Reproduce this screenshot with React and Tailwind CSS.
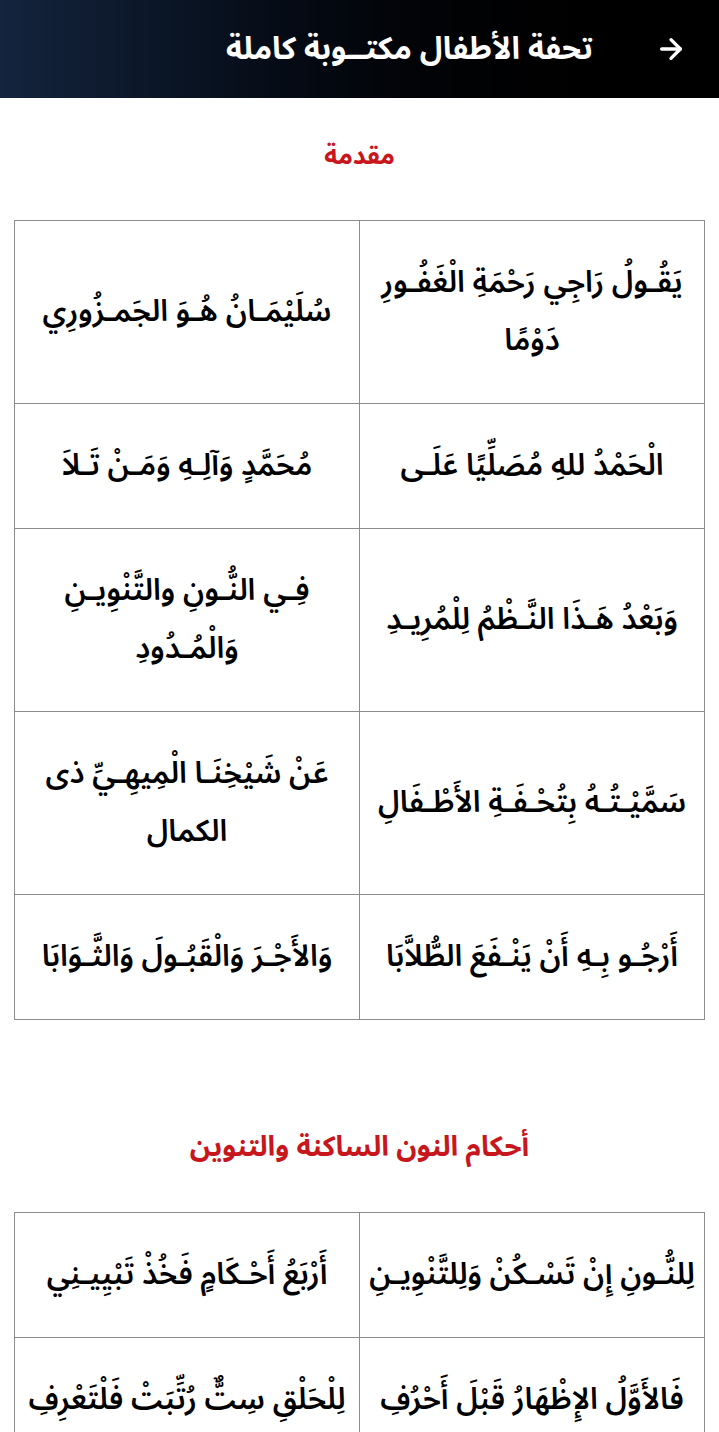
import React from 'react';
import { ArrowRight } from 'lucide-react';

// كل بيت: [الشطر الأول, الشطر الثاني]، وكل شطر مصفوفة أسطر
const intro = [
  [['يَقُـولُ رَاجِي رَحْمَةِ الْغَفُـورِ', 'دَوْمًا'], ['سُلَيْمَـانُ هُـوَ الجَمـزُورِي']],
  [['الْحَمْدُ للهِ مُصَلِّيًا عَلَـى'], ['مُحَمَّدٍ وَآلِـهِ وَمَـنْ تَـلاَ']],
  [['وَبَعْدُ هَـذَا النَّـظْمُ لِلْمُرِيـدِ'], ['فِـي النُّـونِ والتَّنْوِيـنِ', 'وَالْمُـدُودِ']],
  [['سَمَّيْـتُـهُ بِتُحْـفَـةِ الأَطْـفَالِ'], ['عَنْ شَيْخِنَـا الْمِيهِـيِّ ذى', 'الكمال']],
  [['أَرْجُـو بِـهِ أَنْ يَنْـفَعَ الطُّلاَّبَا'], ['وَالأَجْـرَ وَالْقَبُـولَ وَالثَّـوَابَا']],
];

const noon = [
  [['لِلنُّـونِ إِنْ تَسْـكُنْ وَلِلتَّنْوِيـنِ'], ['أَرْبَعُ أَحْـكَامٍ فَخُذْ تَبْيِيـنِي']],
  [['فَالأَوَّلُ الإِظْهَارُ قَبْلَ أَحْرُفِ'], ['لِلْحَلْقِ سِتٌّ رُتِّبَتْ فَلْتَعْرِفِ']],
];

function Verses({ rows }) {
  return (
    <table className="w-full table-fixed border-collapse">
      <tbody>
        {rows.map((r, i) => (
          <tr key={i}>
            {r.map((lines, j) => (
              <td
                key={j}
                className="border border-[#8c8c8c] px-1 py-[33px] text-center align-middle text-[30px] leading-[58px] font-semibold text-black"
              >
                {lines.map((l, k) => (
                  <div key={k} className="whitespace-nowrap">{l}</div>
                ))}
              </td>
            ))}
          </tr>
        ))}
      </tbody>
    </table>
  );
}

export default function App() {
  return (
    <div dir="rtl" className="w-full min-h-screen bg-white font-['Noto_Sans_Arabic','DejaVu_Sans',sans-serif]">
      {/* شريط العنوان */}
      <header className="h-[98px] flex items-center gap-[62px] pr-[32px] bg-linear-to-l from-black via-[#03060c] to-[#14243e]">
        <ArrowRight size={32} strokeWidth={2.5} className="text-white" />
        <h1 className="text-white text-[31px] font-bold">تحفة الأطفال مكتــوبة كاملة</h1>
      </header>

      <section className="px-[14px]">
        <h2 className="mt-[42px] mb-[48px] text-center text-[#c8161d] text-[25px] leading-[32px] font-bold">مقدمة</h2>
        <Verses rows={intro} />

        <h2 className="mt-[112px] mb-[48px] text-center text-[#c8161d] text-[28px] leading-[32px] font-bold">أحكام النون الساكنة والتنوين</h2>
        <Verses rows={noon} />
      </section>
    </div>
  );
}
